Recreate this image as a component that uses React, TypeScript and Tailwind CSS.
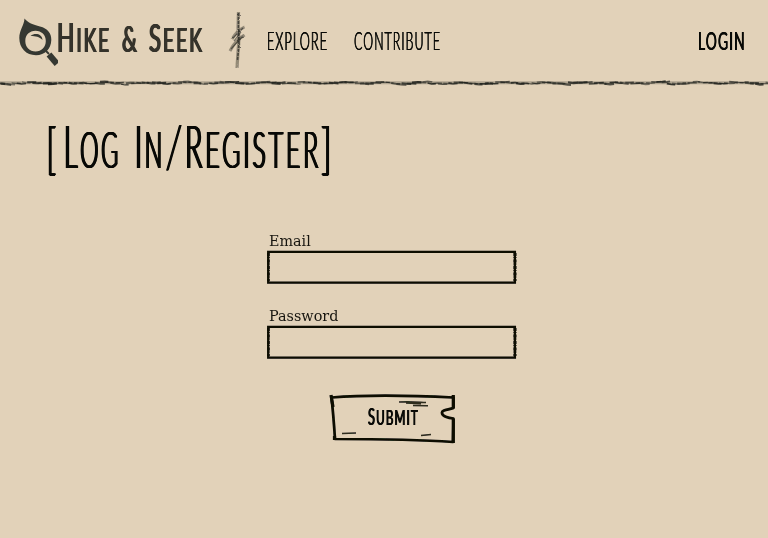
import { useLayoutEffect, useRef, type ReactNode } from "react";

/** Narrow hand lettering: squeezes one word to the width of its box. */
function Word({ className, children }: { className: string; children: ReactNode }) {
  const box = useRef<HTMLSpanElement>(null);
  const ink = useRef<HTMLSpanElement>(null);
  useLayoutEffect(() => {
    if (!box.current || !ink.current) return;
    const natural = ink.current.offsetWidth;
    ink.current.style.transform = `scaleX(${box.current.clientWidth / natural})`;
  }, []);
  return (
    <span ref={box} className={`block shrink-0 whitespace-nowrap ${className}`}>
      <span ref={ink} className="inline-block origin-left">
        {children}
      </span>
    </span>
  );
}

function noise(seed: number) {
  const v = Math.sin(seed * 127.1 + 11.7) * 43758.5453;
  return v - Math.floor(v);
}

/** A charcoal line built from short overlapping strokes. */
function RoughRule() {
  const strokes = Array.from({ length: 150 }, (_, i) => {
    const x = i * 5.2 - 4;
    const y = 3.9 + Math.sin(i * 0.83) * 0.8 + (noise(i) - 0.5) * 1.1;
    return {
      d: `M${x} ${y}l${4 + noise(i + 40) * 2} ${(noise(i + 90) - 0.35) * 1.5}l${3 + noise(i + 7) * 2} ${(noise(i + 13) - 0.5) * 1.2}`,
      w: 1.1 + noise(i + 200) * 1.3,
      o: 0.5 + noise(i + 300) * 0.4,
    };
  });
  return (
    <svg className="block h-2 w-full" viewBox="0 0 768 8" preserveAspectRatio="none" fill="none" stroke="#20221d">
      <path d="M0 3.8H768" strokeWidth="3" opacity=".25" />
      {strokes.map((s, i) => (
        <path key={i} d={s.d} strokeWidth={s.w} opacity={s.o} />
      ))}
    </svg>
  );
}

function Logo() {
  return (
    <svg className="h-[52px] w-[42px] shrink-0" viewBox="0 0 42 52" fill="none">
      <g filter="url(#ink)">
        <path
          fill="#353830"
          fillRule="evenodd"
          d="M6.500 2.500C10 7 15 8.500 22 10.500C29.500 12.500 33.500 17 33.300 24C33 33 27 39.200 18 39.200C8 39.200 1.300 32 1.300 22C1.300 14 6 10 6.500 2.500ZM17.500 14.800C11.500 14.800 7.300 19 7.300 25C7.300 31 11.500 35.500 17.500 35.500C23.500 35.500 27.800 31 27.800 25C27.800 19 23.500 14.800 17.500 14.800Z"
        />
        <path fill="#353830" d="M12.500 19.800C17 16.500 24 17.500 24.500 24C21 20.500 18 20.500 12.500 19.800Z" />
        <path d="M31 38.500L39 48" stroke="#353830" strokeWidth="6.200" />
        <path d="M28 35L31 38" stroke="#353830" strokeWidth="1.800" />
      </g>
    </svg>
  );
}

function Twig() {
  return (
    <svg className="h-[60px] w-[18px] shrink-0" viewBox="0 0 18 60" fill="none" stroke="#24241e" filter="url(#pencil)">
      <path d="M10.500 2L10 18L11 29L10 42L9 58" strokeWidth="3.200" opacity=".42" />
      <path d="M10.500 3L10.500 22L11 34L9.500 50" strokeWidth="1.600" opacity=".7" strokeDasharray="3 1" />
      <path d="M16.500 17C12 19 8 22 4 29M16.500 25C11 29 7 31 2 41" strokeWidth="3" opacity=".42" />
      <path d="M15 18L5 28M15 26L3 39M13 22L6 31" strokeWidth="1.200" opacity=".6" />
    </svg>
  );
}

function Field({ label, labelWidth, type }: { label: string; labelWidth: string; type: string }) {
  return (
    <label className="flex w-[250px] flex-col">
      <span className="flex h-[18px] items-baseline pl-[2px] font-['DejaVu_Serif',serif] text-[15px] leading-[18px] text-[#17150f]">
        <Word className={labelWidth}>{label}</Word>
      </span>
      <span className="grid h-[34px] grid-cols-1 grid-rows-1">
        <svg
          className="col-start-1 row-start-1 h-[34px] w-[250px]"
          viewBox="0 0 250 34"
          fill="none"
          stroke="#080906"
          filter="url(#ink)"
        >
          <path d="M1.200 1.900H247.900V32.700H1.200Z" strokeWidth="2.300" />
          <path d="M1.200 3V31M248 3V31" strokeWidth="3" strokeDasharray="3 1 1 1.500" />
        </svg>
        <input type={type} className="col-start-1 row-start-1 bg-transparent px-3 outline-none" />
      </span>
    </label>
  );
}

export default function App() {
  return (
    <div className="flex h-[538px] w-full flex-col overflow-hidden bg-[#e2d2b9] font-[Lato,sans-serif] text-[#080906]">
      <svg className="absolute size-0">
        <filter id="pencil" x="-10%" y="-10%" width="120%" height="120%">
          <feTurbulence type="fractalNoise" baseFrequency=".35" numOctaves="2" seed="4" />
          <feDisplacementMap in="SourceGraphic" scale="2" xChannelSelector="R" yChannelSelector="G" />
        </filter>
        <filter id="ink" x="-2%" y="-10%" width="104%" height="120%">
          <feTurbulence type="fractalNoise" baseFrequency=".3" numOctaves="2" seed="8" />
          <feDisplacementMap in="SourceGraphic" scale="1.200" xChannelSelector="R" yChannelSelector="G" />
        </filter>
      </svg>

      <header className="flex h-[79px] shrink-0 items-start">
        <a className="flex pl-[18px]" href="#">
          <span className="flex pt-4">
            <Logo />
          </span>
          <span className="-ml-[3px] flex h-[60px] items-baseline pt-[17px] text-[40px] leading-10 tracking-[.09em] text-[#35332b] [text-shadow:1.200px_0_currentColor,-1.200px_0_currentColor,.5px_.3px_currentColor]">
            <Word className="mr-[11px] w-[54px]">
              H<span className="text-[33px]">IKE</span>
            </Word>
            <Word className="mr-[10px] w-[17px] text-[37px]">&amp;</Word>
            <Word className="w-[55px] text-[38px]">
              S<span className="text-[33px]">EEK</span>
            </Word>
          </span>
        </a>
        <span className="flex pt-[10px] pl-[24px]">
          <Twig />
        </span>
        <nav className="flex flex-1 items-baseline pt-[29px] pr-[22px] pl-[21px] text-[24.500px] leading-6 tracking-[.08em]">
          <Word className="mr-[26px] w-[61px] font-light [text-shadow:.6px_0_currentColor,-.6px_0_currentColor]">EXPLORE</Word>
          <Word className="w-[87px] font-light [text-shadow:.6px_0_currentColor,-.6px_0_currentColor]">CONTRIBUTE</Word>
          <Word className="ml-auto w-[48px] [text-shadow:.5px_0_currentColor,-.5px_0_currentColor]">LOGIN</Word>
        </nav>
      </header>
      <RoughRule />

      <main className="flex flex-col">
        <h1 className="flex h-[76px] items-baseline pt-[28px] pl-[46px] text-[60px] leading-[60px] font-light tracking-[.1em] [text-shadow:1px_.3px_currentColor,-1px_-.3px_currentColor,2px_.3px_currentColor,-2px_-.3px_currentColor]">
          <Word className="mr-[4px] w-[14px] text-[55px] [text-shadow:1px_0_currentColor,-1px_0_currentColor,0_.7px_currentColor]">[</Word>
          <Word className="mr-[14px] w-[57px]">
            L<span className="text-[52px]">OG</span>
          </Word>
          <Word className="w-[30px]">
            I<span className="text-[52px]">N</span>
          </Word>
          <Word className="mr-[2px] w-[18px] text-[59px] tracking-normal [text-shadow:.8px_0_currentColor,-.8px_0_currentColor]">/</Word>
          <Word className="w-[136px]">
            R<span className="text-[52px]">EGISTER</span>
          </Word>
          <Word className="w-[15px] text-[55px] [text-shadow:1px_0_currentColor,-1px_0_currentColor,0_.7px_currentColor]">]</Word>
        </h1>
        <form className="flex flex-col pt-[69px] pl-[267px]" onSubmit={(e) => e.preventDefault()}>
          <Field label="Email" labelWidth="w-[42px]" type="email" />
          <div className="h-[23px]" />
          <Field label="Password" labelWidth="w-[69px]" type="password" />
          <button className="mt-[34px] ml-[62px] grid h-[52px] w-[128px] grid-cols-1 grid-rows-1" type="submit">
            <svg className="col-start-1 row-start-1" viewBox="0 0 128 52" fill="none" stroke="#080906" filter="url(#ink)">
              <path
                d="M2.500 4.500C40 1.500 84 2.500 124.500 4.500V15C118 17 112.500 17 113 20C113 23 119 25 124.500 25.500L124 49C82 46 44 46 6 46C5 31 4 18 2.500 4.500Z"
                strokeWidth="2.700"
                strokeLinejoin="round"
              />
              <path d="M2 2L4 14M124.300 2V15M124.300 26V50M5.500 43V47" strokeWidth="3.200" />
              <path d="M70 9C80 8 88 9 97 9.500M77 10L92 10.800M84 12.500L99 12.800M13 40.500L27 40M92 42.500L102 41.500" strokeWidth="1.500" opacity=".85" />
            </svg>
            <span className="col-start-1 row-start-1 flex items-baseline pt-[11px] pl-[38.500px] text-[24px] leading-6 tracking-[.09em] [text-shadow:.8px_0_currentColor,-.8px_0_currentColor]">
              <Word className="w-[51px] text-left">
                S<span className="text-[22px]">UBMIT</span>
              </Word>
            </span>
          </button>
        </form>
      </main>
    </div>
  );
}
